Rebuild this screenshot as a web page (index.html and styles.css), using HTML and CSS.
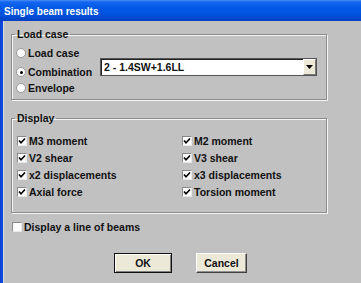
FILE: index.html
```html
<!DOCTYPE html>
<html>
<head>
<meta charset="utf-8">
<link rel="stylesheet" href="styles.css">
</head>
<body>
<div class="window">
  <div class="titlebar">Single beam results</div>
  <div class="frame">
    <fieldset class="group loadcase">
      <legend>Load case</legend>
      <div class="lc-grid">
        <label class="opt r1"><span class="radio"></span>Load case</label>
        <label class="opt r2"><span class="radio on"></span>Combination</label>
        <label class="opt r3"><span class="radio"></span>Envelope</label>
        <div class="combo">
          <span class="combo-text">2 - 1.4SW+1.6LL</span>
          <span class="combo-btn"><svg width="7" height="4" viewBox="0 0 7 4"><path d="M0 0h7L3.5 4z" fill="#000"/></svg></span>
        </div>
      </div>
    </fieldset>
    <fieldset class="group display">
      <legend>Display</legend>
      <div class="cb-grid">
        <label class="opt"><span class="check on"><svg width="8" height="8" viewBox="0 0 8 8"><path d="M1 3.5L3 5.8L7 1.5" stroke="#000" stroke-width="1.6" fill="none"/></svg></span>M3 moment</label>
        <label class="opt"><span class="check on"><svg width="8" height="8" viewBox="0 0 8 8"><path d="M1 3.5L3 5.8L7 1.5" stroke="#000" stroke-width="1.6" fill="none"/></svg></span>M2 moment</label>
        <label class="opt"><span class="check on"><svg width="8" height="8" viewBox="0 0 8 8"><path d="M1 3.5L3 5.8L7 1.5" stroke="#000" stroke-width="1.6" fill="none"/></svg></span>V2 shear</label>
        <label class="opt"><span class="check on"><svg width="8" height="8" viewBox="0 0 8 8"><path d="M1 3.5L3 5.8L7 1.5" stroke="#000" stroke-width="1.6" fill="none"/></svg></span>V3 shear</label>
        <label class="opt"><span class="check on"><svg width="8" height="8" viewBox="0 0 8 8"><path d="M1 3.5L3 5.8L7 1.5" stroke="#000" stroke-width="1.6" fill="none"/></svg></span>x2 displacements</label>
        <label class="opt"><span class="check on"><svg width="8" height="8" viewBox="0 0 8 8"><path d="M1 3.5L3 5.8L7 1.5" stroke="#000" stroke-width="1.6" fill="none"/></svg></span>x3 displacements</label>
        <label class="opt"><span class="check on"><svg width="8" height="8" viewBox="0 0 8 8"><path d="M1 3.5L3 5.8L7 1.5" stroke="#000" stroke-width="1.6" fill="none"/></svg></span>Axial force</label>
        <label class="opt"><span class="check on"><svg width="8" height="8" viewBox="0 0 8 8"><path d="M1 3.5L3 5.8L7 1.5" stroke="#000" stroke-width="1.6" fill="none"/></svg></span>Torsion moment</label>
      </div>
    </fieldset>
    <label class="opt line-beams"><span class="check"></span>Display a line of beams</label>
    <div class="buttons">
      <button class="btn ok">OK</button>
      <button class="btn cancel">Cancel</button>
    </div>
  </div>
</div>
</body>
</html>
```

FILE: styles.css
```css
html, body {
  margin: 0;
  padding: 0;
  background: #c0c0c0;
}
body {
  font-family: "Liberation Sans", Arial, sans-serif;
  font-size: 10px;
  font-weight: bold;
  color: #111;
}
.window {
  width: 361px;
  height: 283px;
  display: flex;
  flex-direction: column;
  background: #c1c1c1;
  overflow: hidden;
}
.titlebar {
  height: 21px;
  line-height: 23px;
  padding-left: 4px;
  color: #fff;
  font-size: 10px;
  background: linear-gradient(#4a8ff7 0, #1466f0 2px, #0259e6 8px, #0054e0 13px, #0048d2 18px, #063dba 21px);
}
.frame {
  flex: 1;
  border-left: 3px solid #0a44d8;
  box-shadow: inset 1px 0 0 #dcdcdc;
  padding-left: 8px;
  display: flex;
  flex-direction: column;
  align-items: flex-start;
}
.group {
  box-sizing: border-box;
  width: 316px;
  margin: 0;
  padding: 0;
  min-width: 0;
  border: 1px solid #8c8c8c;
  box-shadow: 1px 1px 0 #f4f4f4, inset 1px 1px 0 #f4f4f4;
}
.group legend {
  padding: 0 2px;
  margin-left: 3px;
  line-height: 12px;
  height: 12px;
  font-size: 10.5px;
}
.loadcase {
  margin-top: 7px;
}
.display {
  margin-top: 12px;
}
.lc-grid {
  display: grid;
  grid-template-columns: 84px 217px;
  grid-template-rows: 19px 16px 12px;
  padding: 7px 0 5px 4px;
}
.lc-grid .opt { align-self: start; }
.lc-grid .r1 { grid-row: 1; grid-column: 1; }
.lc-grid .r2 { grid-row: 2; grid-column: 1; }
.lc-grid .r3 { grid-row: 3; grid-column: 1; }
.opt {
  display: flex;
  align-items: center;
  height: 12px;
  line-height: 12px;
  white-space: nowrap;
  font-size: 10.5px;
}
.radio {
  box-sizing: border-box;
  width: 10px;
  height: 10px;
  border-radius: 50%;
  background: #fbfbfb;
  border: 1px solid #9a9a9a;
  margin-right: 2px;
  position: relative;
  flex: none;
}
.radio.on::after {
  content: "";
  position: absolute;
  left: 2.5px;
  top: 2.5px;
  width: 3px;
  height: 3px;
  border-radius: 50%;
  background: #000;
}
.combo {
  grid-column: 2;
  grid-row: 1 / 3;
  align-self: end;
  box-sizing: border-box;
  height: 18px;
  margin-bottom: 6px;
  background: #fff;
  border: 1px solid #555;
  box-shadow: inset 1px 1px 0 #222;
  display: flex;
  align-items: center;
  justify-content: space-between;
  padding-left: 3px;
}
.combo-text {
  font-size: 10.5px;
}
.combo-btn {
  box-sizing: border-box;
  width: 13px;
  height: 16px;
  background: #ece9d8;
  border: 1px solid #fff;
  border-right-color: #777;
  border-bottom-color: #777;
  display: flex;
  align-items: center;
  justify-content: center;
}
.cb-grid {
  display: grid;
  grid-template-columns: 165px 140px;
  row-gap: 5px;
  padding: 11px 0 14px 5px;
}
.check {
  box-sizing: border-box;
  width: 10px;
  height: 10px;
  background: #fbfbfb;
  border: 1px solid #8a8a8a;
  border-right-color: #e8e8e8;
  border-bottom-color: #e8e8e8;
  margin-right: 2px;
  flex: none;
  display: flex;
  align-items: center;
  justify-content: center;
}
.line-beams {
  margin-top: 8px;
  margin-left: 1px;
}
.buttons {
  display: flex;
  gap: 24px;
  margin-top: 20px;
  margin-left: 103px;
}
.btn {
  box-sizing: border-box;
  height: 20px;
  font-family: "Liberation Sans", Arial, sans-serif;
  font-size: 10.5px;
  font-weight: bold;
  color: #111;
  background: #ece9d8;
  padding: 0;
}
.ok {
  width: 58px;
  border: 1px solid #111;
  box-shadow: inset 1px 1px 0 #fff, inset -1px -1px 0 #808080;
}
.cancel {
  width: 51px;
  border: 1px solid #fff;
  border-right-color: #404040;
  border-bottom-color: #404040;
  box-shadow: inset -1px -1px 0 #909090;
}
```
